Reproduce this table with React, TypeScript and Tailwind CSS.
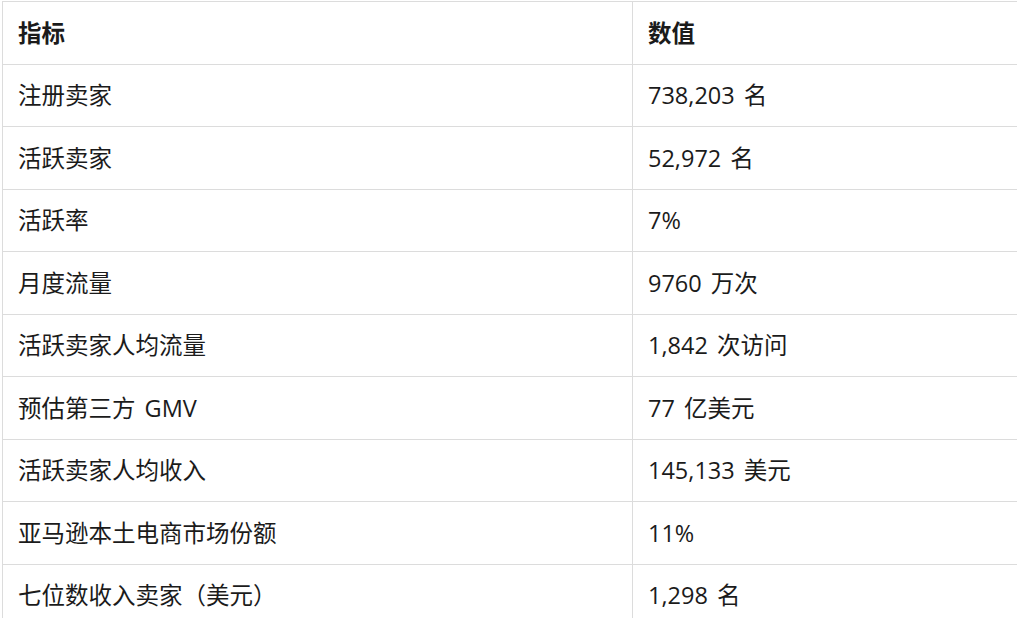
import React from "react";

const rows: [string, string][] = [
  ["注册卖家", "738,203 名"],
  ["活跃卖家", "52,972 名"],
  ["活跃率", "7%"],
  ["月度流量", "9760 万次"],
  ["活跃卖家人均流量", "1,842 次访问"],
  ["预估第三方 GMV", "77 亿美元"],
  ["活跃卖家人均收入", "145,133 美元"],
  ["亚马逊本土电商市场份额", "11%"],
  ["七位数收入卖家（美元）", "1,298 名"],
];

export default function App() {
  return (
    <div
      className="w-[1017px] h-[618px] overflow-hidden bg-white text-[#1b1b1b]"
      style={{ fontFamily: '"Open Sans", "Noto Sans CJK SC", sans-serif' }}
    >
      <table className="ml-[2px] mt-[1px] w-[1040px] border-collapse text-[23.5px] leading-none [word-spacing:3px]">
        <thead>
          <tr className="h-[62.5px]">
            <th className="w-[630px] border border-[#dcdcdc] pl-[15px] pt-[1px] text-left font-bold">指标</th>
            <th className="border border-[#dcdcdc] pl-[15px] pt-[1px] text-left font-bold">数值</th>
          </tr>
        </thead>
        <tbody>
          {rows.map(([a, b]) => (
            <tr key={a} className="h-[62.5px]">
              <td className="border border-[#dcdcdc] pl-[15px] pt-[1px]">{a}</td>
              <td className="border border-[#dcdcdc] pl-[15px] pt-[1px]">{b}</td>
            </tr>
          ))}
        </tbody>
      </table>
    </div>
  );
}
